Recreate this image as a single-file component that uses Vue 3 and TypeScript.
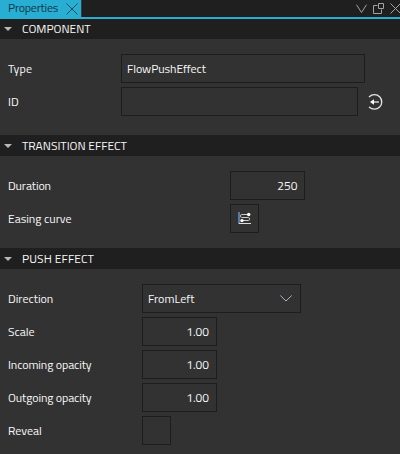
<script setup lang="ts">
interface Row {
  label: string
  kind: 'text' | 'id' | 'number' | 'curve' | 'select' | 'check'
  value?: string
  tone: string
}
interface Section {
  title: string
  key: string
  rows: Row[]
}

const sections: Section[] = [
  {
    title: 'COMPONENT',
    key: 'component',
    rows: [
      { label: 'Type', kind: 'text', value: 'FlowPushEffect', tone: 'type' },
      { label: 'ID', kind: 'id', value: '', tone: 'short' },
    ],
  },
  {
    title: 'TRANSITION EFFECT',
    key: 'transition',
    rows: [
      { label: 'Duration', kind: 'number', value: '250', tone: 'duration' },
      { label: 'Easing curve', kind: 'curve', tone: 'easing' },
    ],
  },
  {
    title: 'PUSH EFFECT',
    key: 'push',
    rows: [
      { label: 'Direction', kind: 'select', value: 'FromLeft', tone: 'direction' },
      { label: 'Scale', kind: 'number', value: '1.00', tone: 'scale' },
      { label: 'Incoming opacity', kind: 'number', value: '1.00', tone: 'incoming' },
      { label: 'Outgoing opacity', kind: 'number', value: '1.00', tone: 'outgoing' },
      { label: 'Reveal', kind: 'check', tone: 'reveal' },
    ],
  },
]
</script>

<template>
  <div class="panel">
    <div class="tabs">
      <div class="tab">
        <span class="tab-title">Properties</span>
        <svg class="tab-close" width="12" height="12" viewBox="0 0 12 12">
          <path d="M.5.5 11.500 11.500M11.500.5.5 11.500" />
        </svg>
      </div>
      <svg class="window-icons" width="45" height="17" viewBox="0 0 45 17">
        <path d="M1.500 4.700 6.500 12.500 11.500 4.700" />
        <path d="M22.500 5.500H18.500V13.500H26.500V9.500M23.500 3.500H28.500V8.500H23.500Z" />
        <path d="M35.500 3.500 45.500 13.500M45.500 3.500 35.500 13.500" />
      </svg>
    </div>
    <section v-for="s in sections" :key="s.key" :class="['section', s.key]">
      <header class="head">
        <svg width="8" height="4" viewBox="0 0 8 4"><path d="M0 0H8L4 4Z" /></svg>
        <span class="title">{{ s.title }}</span>
      </header>
      <div class="rows">
        <div v-for="r in s.rows" :key="r.label" class="row">
          <div class="label"><span :class="r.tone">{{ r.label }}</span></div>
          <div :class="['field', r.kind]">
            <span v-if="r.value" class="value">{{ r.value }}</span>
            <svg v-if="r.kind === 'select'" class="chevron" width="12" height="7" viewBox="0 0 12 7">
              <path d="M.3.5 6 6 11.700.5" />
            </svg>
            <svg v-if="r.kind === 'curve'" width="13" height="13" viewBox="0 0 13 13">
              <path class="axis" d="M1 0V12" />
              <path class="base" d="M1 11.500H13" />
              <path class="curve-line" d="M11 2.500H3.500Q2.500 2.500 2.500 4T3.500 5.500H10.500Q11.500 5.500 11.500 7T10.500 8.500H4" />
              <circle cx="10.700" cy="2.500" r="1.700" />
              <circle cx="4" cy="8.600" r="1.700" />
            </svg>
          </div>
          <svg v-if="r.kind === 'id'" class="link" width="16" height="18" viewBox="0 0 16 18">
            <path class="ring" d="M2 4Q4.500 1.700 7.500 1.700A7.200 7.200 0 0 1 7.500 16.200Q4.500 16.200 2 14" />
            <path class="shaft" d="M5 9H12" />
            <path class="arrow" d="M3 9 7 6.300V11.700Z" />
          </svg>
        </div>
      </div>
    </section>
  </div>
</template>

<style>
body {
  margin: 0;
  background: #323232;
}
</style>

<style scoped>
.panel {
  width: 400px;
  height: 454px;
  overflow: hidden;
  background: #323232;
  color: #f8f8f8;
  font: 12px/16px "Titillium Web", Roboto, sans-serif;
  white-space: nowrap;
}
.tabs {
  box-sizing: border-box;
  height: 19px;
  display: flex;
  justify-content: space-between;
  background: #1f1f1f;
  border-bottom: 2px solid #29aed3;
}
.tab {
  box-sizing: border-box;
  width: 82px;
  display: flex;
  align-items: center;
  justify-content: space-between;
  padding: 0 3px 0 8px;
  background: #29aed3;
  border-right: 1px solid #3b3b3b;
  color: #12374a;
}
.tab-title {
  align-self: flex-start;
  line-height: 16px;
  letter-spacing: -0.24px;
}
.tab-close {
  fill: none;
  stroke: #164e60;
}
.window-icons {
  fill: none;
  stroke: #a2a2a2;
}
.head {
  height: 21px;
  display: flex;
  align-items: center;
  gap: 10px;
  padding-left: 4px;
  background: #1f1f1f;
}
.component .head {
  height: 20px;
}
.head svg {
  fill: #b8b8b8;
}
.push .title {
  letter-spacing: 0.12px;
}
.rows {
  display: flex;
  flex-direction: column;
  gap: 4px;
  padding: 15px 0 15px 8px;
}
.component .rows {
  padding-bottom: 19px;
}
.row {
  display: flex;
  align-items: center;
  height: 29px;
}
.label {
  width: 113px;
  flex: none;
}
.type {
  letter-spacing: 0.1px;
}
.incoming,
.outgoing,
.duration {
  letter-spacing: -0.12px;
}
.transition .label {
  width: 222px;
}
.push .label {
  width: 134px;
}
.field {
  box-sizing: border-box;
  height: 29px;
  display: flex;
  align-items: center;
  border: 1px solid #1d1d1d;
  padding: 0 5px;
}
.text {
  width: 244px;
  letter-spacing: -0.08px;
}
.field.id {
  width: 237px;
}
.number {
  width: 75px;
  justify-content: flex-end;
  padding-right: 6.5px;
}
.push .number {
  padding-right: 7px;
}
.select {
  width: 159px;
  justify-content: space-between;
  padding-right: 8px;
}
.curve,
.check {
  width: 29px;
}
.curve {
  padding: 0 0 0 7px;
}
.chevron {
  fill: none;
  stroke: #a3b6c6;
}
.curve svg {
  fill: #fff;
}
.curve path {
  fill: none;
}
.axis {
  stroke: #75a9e6;
  stroke-width: 1.2;
}
.base {
  stroke: #ddd;
}
.curve-line {
  stroke: #c8c8c8;
}
.link {
  margin-left: 9px;
}
.ring,
.shaft {
  fill: none;
  stroke: #e6e6e6;
  stroke-width: 1.3;
}
.arrow {
  fill: #fff;
}
</style>
